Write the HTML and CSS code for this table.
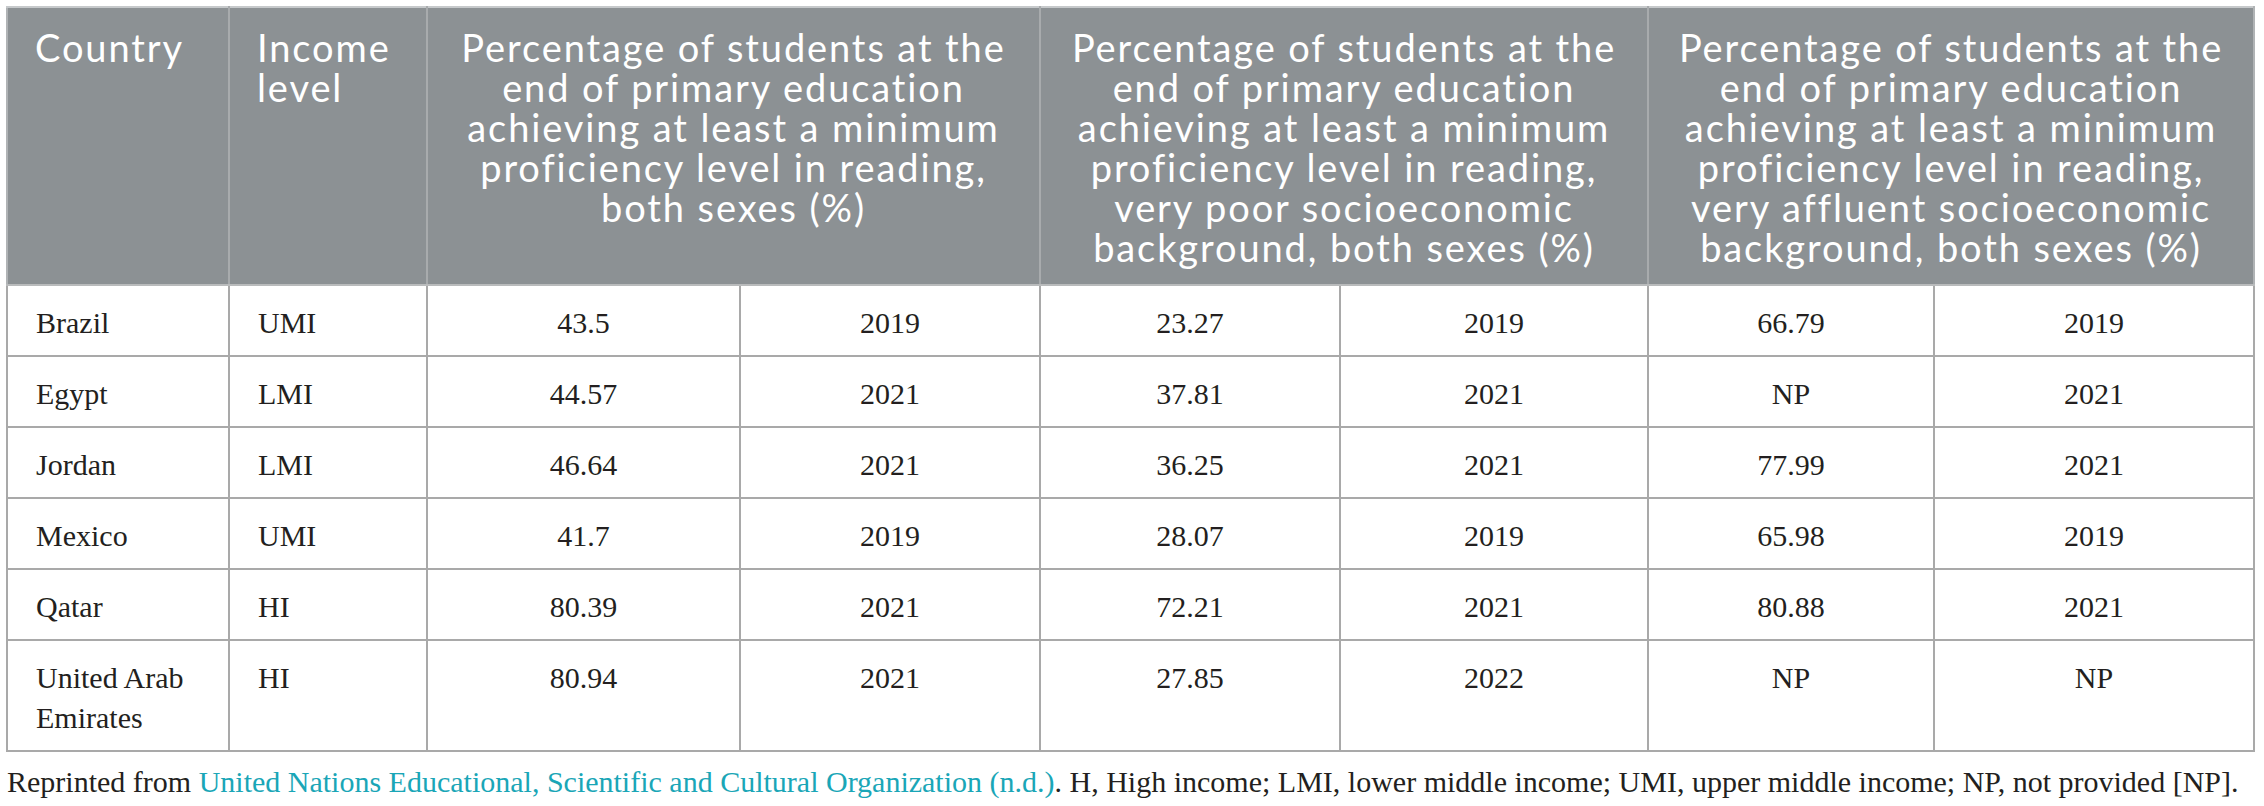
FILE: index.html
```html
<!DOCTYPE html>
<html lang="en">
<head>
<meta charset="utf-8">
<title>Reading proficiency table</title>
<link rel="stylesheet" href="styles.css">
</head>
<body>
<div class="page">
  <table class="data">
    <colgroup>
      <col class="c-country">
      <col class="c-income">
      <col class="c-g1a">
      <col class="c-g1b">
      <col class="c-g2a">
      <col class="c-g2b">
      <col class="c-g3a">
      <col class="c-g3b">
    </colgroup>
    <thead>
      <tr>
        <th class="h-left">Country</th>
        <th class="h-left">Income
level</th>
        <th class="h-group" colspan="2">Percentage of students at the
end of primary education
achieving at least a minimum
proficiency level in reading,
both sexes (%)</th>
        <th class="h-group" colspan="2">Percentage of students at the
end of primary education
achieving at least a minimum
proficiency level in reading,
very poor socioeconomic
background, both sexes (%)</th>
        <th class="h-group" colspan="2">Percentage of students at the
end of primary education
achieving at least a minimum
proficiency level in reading,
very affluent socioeconomic
background, both sexes (%)</th>
      </tr>
    </thead>
    <tbody>
      <tr><td class="l">Brazil</td><td class="l">UMI</td><td>43.5</td><td>2019</td><td>23.27</td><td>2019</td><td>66.79</td><td>2019</td></tr>
      <tr><td class="l">Egypt</td><td class="l">LMI</td><td>44.57</td><td>2021</td><td>37.81</td><td>2021</td><td>NP</td><td>2021</td></tr>
      <tr><td class="l">Jordan</td><td class="l">LMI</td><td>46.64</td><td>2021</td><td>36.25</td><td>2021</td><td>77.99</td><td>2021</td></tr>
      <tr><td class="l">Mexico</td><td class="l">UMI</td><td>41.7</td><td>2019</td><td>28.07</td><td>2019</td><td>65.98</td><td>2019</td></tr>
      <tr><td class="l">Qatar</td><td class="l">HI</td><td>80.39</td><td>2021</td><td>72.21</td><td>2021</td><td>80.88</td><td>2021</td></tr>
      <tr><td class="l">United Arab<br>Emirates</td><td class="l">HI</td><td>80.94</td><td>2021</td><td>27.85</td><td>2022</td><td>NP</td><td>NP</td></tr>
    </tbody>
  </table>
  <p class="note">Reprinted from <a class="ref" href="#">United Nations Educational, Scientific and Cultural Organization (n.d.)</a>. H, High income; LMI, lower middle income; UMI, upper middle income; NP, not provided [NP].</p>
</div>
</body>
</html>
```

FILE: styles.css
```css
html, body {
  margin: 0;
  padding: 0;
  background: #ffffff;
}

.page {
  padding: 6px 9px 0 6px;
}

.data {
  border-collapse: collapse;
  table-layout: fixed;
  width: 2249px;
  font-family: "Liberation Serif", "Times New Roman", serif;
  font-size: 30px;
  color: #231f20;
}

.c-country { width: 222px; }
.c-income { width: 198px; }
.c-g1a { width: 313px; }
.c-g1b { width: 300px; }
.c-g2a { width: 300px; }
.c-g2b { width: 308px; }
.c-g3a { width: 286px; }
.c-g3b { width: 320px; }

.data thead th {
  background: #8c9194;
  color: #ffffff;
  font-family: Lato, "Open Sans", sans-serif;
  font-weight: 400;
  font-size: 38px;
  line-height: 40px;
  letter-spacing: 1.9px;
  vertical-align: top;
  white-space: pre-line;
  padding: 19px 10px 17px 10px;
  border-top: 2px solid #c6c9cb;
  border-left: 2px solid #a8abad;
  border-right: 2px solid #a8abad;
  border-bottom: 2px solid #b9bbbc;
}

.data thead th:first-child {
  border-left-color: #b0b3b5;
}

.data thead th:last-child {
  border-right-color: #b0b3b5;
}

.data thead th.h-left {
  text-align: left;
  padding-left: 27px;
}

.data thead th.h-group {
  text-align: center;
}

.data tbody td {
  border: 2px solid #a9a9a9;
  padding: 17px 20px 12px 20px;
  line-height: 40px;
  text-align: center;
  vertical-align: top;
}

.data tbody td.l {
  text-align: left;
  padding-left: 28px;
}

.note {
  margin: 10px 0 0 1px;
  font-family: "Liberation Serif", "Times New Roman", serif;
  font-size: 30px;
  line-height: 40px;
  color: #231f20;
  white-space: nowrap;
}

.ref {
  color: #1aa6b7;
  text-decoration: none;
}
```
